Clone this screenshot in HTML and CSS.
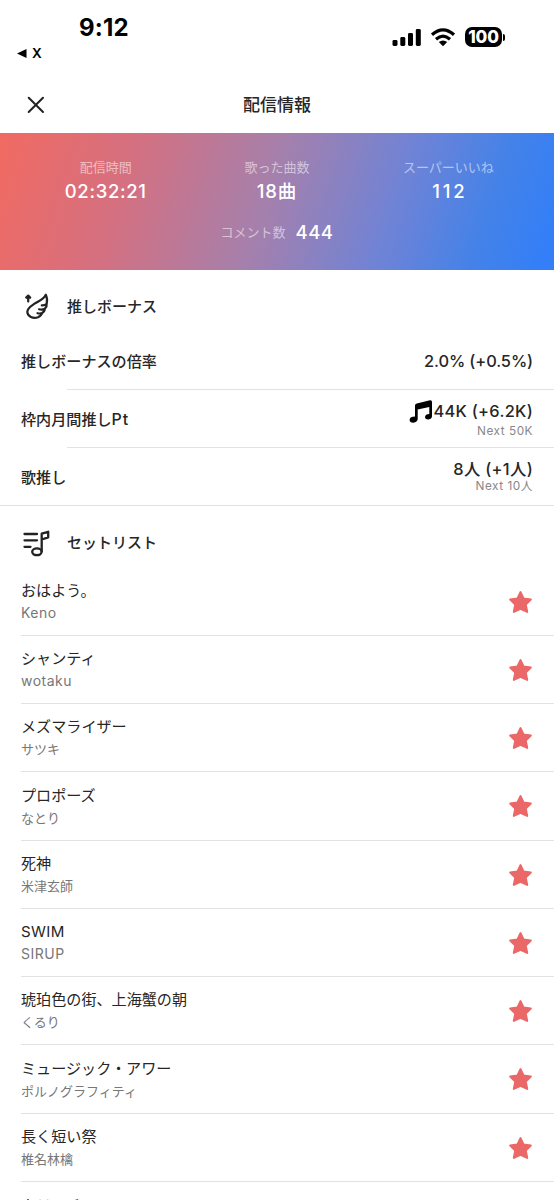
FILE: index.html
```html
<!DOCTYPE html>
<html lang="ja">
<head>
<meta charset="utf-8">
<title>配信情報</title>
<link rel="stylesheet" href="styles.css">
</head>
<body>
<svg class="defs" width="0" height="0"><symbol id="star" viewBox="0 0 24 24"><path d="M12 2 15 8.3 21.9 9.1 17 13.9 18.4 21 12 18 5.6 21 7 13.9 2.1 9.1 9 8.3Z" fill="#eb6868" stroke="#eb6868" stroke-width="2" stroke-linejoin="round"/></symbol></svg>
<main class="screen">
  <header class="status">
    <div class="clock"><div class="time">9:12</div><div class="back"><svg width="10" height="9" viewBox="0 0 10 9"><path d="M0 4.5 9.5 0v9z"/></svg><span>X</span></div></div>
    <div class="indicators">
      <svg width="29" height="19" viewBox="0 0 29 19"><rect x="0.5" y="12" width="5" height="6" rx="1.4"/><rect x="8.3" y="9" width="5" height="9" rx="1.4"/><rect x="16" y="5" width="5" height="13" rx="1.4"/><rect x="23.8" y="1" width="5" height="17" rx="1.4"/></svg>
      <svg class="wifi" width="26" height="19" viewBox="0 0 26 19"><path d="M2 6.8Q13-3.2 24 6.8M6 11.2Q13 5 20 11.2" fill="none" stroke="#000" stroke-width="3.2"/><path d="M8.8 14Q13 10.8 17.2 14L13 18.3Z"/></svg>
      <div class="battery">100</div><i class="cap"></i>
    </div>
  </header>
  <nav class="nav">
    <svg width="18" height="18" viewBox="0 0 18 18"><path d="M1.7 1.7 16 16M16 1.7 1.7 16" fill="none" stroke="#222" stroke-width="2" stroke-linecap="round"/></svg>
    <h1>配信情報</h1>
  </nav>
  <section class="hero">
    <div class="stats">
      <div class="stat"><span class="label">配信時間</span><b class="s-time">02:32:21</b></div>
      <div class="stat"><span class="label">歌った曲数</span><b class="s-songs">18曲</b></div>
      <div class="stat"><span class="label">スーパーいいね</span><b class="s-like">112</b></div>
    </div>
    <div class="comments"><span class="label">コメント数</span><b>444</b></div>
  </section>
  <section class="bonus">
    <div class="heading"><svg width="28" height="30" viewBox="0 0 28 30" fill="none" stroke="#222" stroke-width="2.2" stroke-linecap="round" stroke-linejoin="round"><path d="M6.2 9.5V4M4.2 5.6 6.2 3.6 8.2 5.6Z"/><path d="M23.8 2.8C21.5 8 17 8.7 12.5 11.7 9 14 5.3 16 5.3 20 5.5 24.3 11 27 16 25.2 18 24.3 19.6 23 20 21 18.5 21.7 17 21.6 15.5 21.2M20 21C21.8 20 22.8 18.5 22.8 16.7 21 17.8 19 17.8 17 17.3M22.8 16.7C24.5 15 25 13.5 24.7 11.8 23 13.2 21.3 13.5 19.8 13.3M24.7 11.8C25.4 8.5 25 5.2 23.8 2.8"/></svg><h2>推しボーナス</h2></div>
    <div class="metric"><span>推しボーナスの倍率</span><div class="value v1"><strong>2.0% (+0.5%)</strong></div></div>
    <div class="metric"><span>枠内月間推し<span class="pt">Pt</span></span><div class="value v2"><strong><svg width="24" height="24" viewBox="0 0 24 24"><path d="M6 5.6Q6 3.9 7.8 3.4L21 .3Q23 0 23 2v14.2Q22.8 19 19.5 19.4 16 19.6 16 17 16.3 14 20.3 13.9V7.1L8.7 9.6V19.3Q8.3 22.3 4.4 22.7 .5 22.6 .6 19.8 1 16.7 6 16.6Z"/></svg>44K (+6.2K)</strong><small>Next 50K</small></div></div>
    <div class="metric"><span>歌推し</span><div class="value v3"><strong>8人 (+1人)</strong><small>Next 10人</small></div></div>
  </section>
  <section class="setlist">
    <div class="heading"><svg width="28" height="30" viewBox="0 0 28 30" fill="none" stroke="#222" stroke-width="2.3" stroke-linecap="round" stroke-linejoin="round"><path d="M2.5 6h12.5M2.5 12.3h12.5M2.5 18.8h6M19.7 23.5V5.7L26.2 3.8v5.5L19.7 11.5"/><ellipse cx="14.9" cy="23.8" rx="4.7" ry="3.4"/></svg><h2>セットリスト</h2></div>
    <ul>
      <li><div><p>おはよう。</p><small class="latin">Keno</small></div><svg class="star"><use href="#star"/></svg></li>
      <li><div><p>シャンティ</p><small class="latin">wotaku</small></div><svg class="star"><use href="#star"/></svg></li>
      <li><div><p>メズマライザー</p><small>サツキ</small></div><svg class="star"><use href="#star"/></svg></li>
      <li><div><p>プロポーズ</p><small>なとり</small></div><svg class="star"><use href="#star"/></svg></li>
      <li><div><p>死神</p><small>米津玄師</small></div><svg class="star"><use href="#star"/></svg></li>
      <li><div><p class="swim">SWIM</p><small class="latin">SIRUP</small></div><svg class="star"><use href="#star"/></svg></li>
      <li><div><p>琥珀色の街、上海蟹の朝</p><small>くるり</small></div><svg class="star"><use href="#star"/></svg></li>
      <li><div><p>ミュージック・アワー</p><small>ポルノグラフィティ</small></div><svg class="star"><use href="#star"/></svg></li>
      <li><div><p>長く短い祭</p><small>椎名林檎</small></div><svg class="star"><use href="#star"/></svg></li>
      <li><div><p>カラーチャート</p></div></li>
    </ul>
  </section>
</main>
</body>
</html>
```
FILE: styles.css
```css
* { box-sizing: border-box; }
body, h1, h2, p, ul { margin: 0; padding: 0; }
body { background: #fff; color: #262626; font-family: Inter, "Noto Sans CJK JP", sans-serif; overflow: hidden; }
.defs { position: absolute; }
.screen { width: 554px; height: 1200px; overflow: hidden; }
.status { height: 77px; display: flex; justify-content: space-between; padding: 14px 49px 0 17px; color: #000; }
.time { font-size: 24px; line-height: 28px; font-weight: 700; padding-left: 62px; letter-spacing: .2px; }
.back { display: flex; align-items: center; gap: 5px; font-size: 13.5px; font-weight: 600; line-height: 16px; margin-top: 3px; }
.indicators { display: flex; align-items: center; height: 20px; margin-top: 13px; }
.wifi { margin: 0 9px; }
.battery { width: 37px; height: 20px; border-radius: 7px; background: #000; color: #fff; font-size: 17px; line-height: 20px; font-weight: 800; text-align: center; letter-spacing: -.2px; }
.cap { width: 2px; height: 7px; margin-left: 1px; background: #000; border-radius: 0 2px 2px 0; }
.nav { height: 56px; display: grid; grid-template-columns: 18px 1fr 18px; align-items: center; padding: 0 27px; }
.nav h1 { font-size: 17px; line-height: 24px; font-weight: 500; text-align: center; }
.hero { height: 137px; padding: 24px 20px 0; background: linear-gradient(108deg, #f16a61 0%, #d57080 23%, #a580ac 48%, #6f83d6 70%, #4482e8 86%, #347ff7 97%); color: #fff; }
.stats { display: grid; grid-template-columns: repeat(3, 1fr); }
.stat { display: flex; flex-direction: column; align-items: center; }
.label { font-size: 13px; line-height: 20px; font-weight: 400; color: rgba(255,255,255,.55); }
.hero b { font-size: 18.5px; line-height: 28px; font-weight: 500; letter-spacing: .5px; }
.hero .s-time { letter-spacing: .65px; }
.hero .s-songs { letter-spacing: .9px; }
.hero .s-like { letter-spacing: 2.8px; margin-right: -3px; }
.comments { display: flex; justify-content: center; align-items: center; gap: 10px; margin-top: 13px; }
.heading { display: flex; align-items: center; gap: 16px; padding-left: 22px; }
.heading h2 { font-size: 15px; font-weight: 500; line-height: 24px; margin-left: 1px; }
.bonus .heading { height: 62px; padding-top: 12px; }
.setlist .heading { height: 61.5px; padding-top: 12px; }
.metric { height: 58px; display: flex; align-items: center; justify-content: space-between; padding: 0 21px; font-size: 15.1px; font-weight: 500; background: linear-gradient(#e2e2e2, #e2e2e2) 67px 100% / 100% 1px no-repeat; }
.metric > span { margin-top: -2px; }
.metric .pt { font-size: 16px; letter-spacing: .8px; }
.metric:last-child { background-position: 0 100%; }
.value { display: flex; flex-direction: column; align-items: flex-end; }
.value strong { display: flex; align-items: center; font-size: 16.4px; line-height: 19px; font-weight: 500; letter-spacing: .3px; white-space: pre; }
.value.v1 strong { letter-spacing: -.1px; }
.value small { font-size: 11.8px; line-height: 15px; font-weight: 400; color: #888; letter-spacing: .5px; }
.setlist ul { list-style: none; }
.setlist li { height: 68.25px; margin-left: 21px; padding-right: 21px; display: flex; justify-content: space-between; background: linear-gradient(#e2e2e2, #e2e2e2) 0 100% / 100% 1px no-repeat; }
.setlist li p { font-size: 15.1px; line-height: 24px; margin-top: 11.3px; font-weight: 400; }
.setlist small { display: block; font-size: 13px; line-height: 20px; color: #777; }
.setlist .latin { font-size: 14px; letter-spacing: .5px; }
.setlist .swim { letter-spacing: .4px; }
.setlist li:last-child p { margin-top: 12px; }
.star { width: 25px; height: 25px; margin-top: 22px; }
```
